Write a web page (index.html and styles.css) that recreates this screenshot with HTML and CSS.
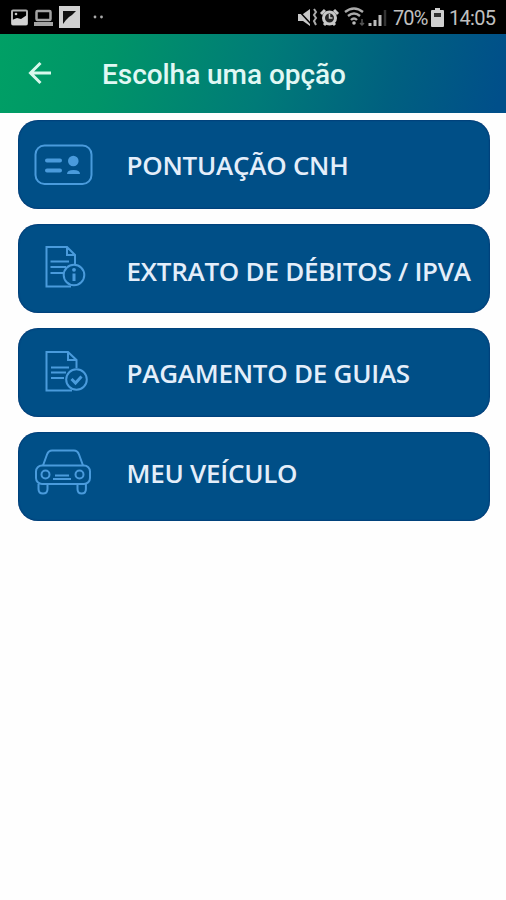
FILE: index.html
```html
<!DOCTYPE html>
<html lang="pt-BR">
<head>
    <meta charset="UTF-8">
    <meta name="viewport" content="width=device-width, initial-scale=1.0">
    <title>Escolha uma opção</title>
    <link rel="stylesheet" href="styles.css">
</head>
<body>
    <!-- Status bar -->
    <div class="status-bar">
        <svg class="status-left" width="110" height="34" viewBox="0 0 110 34">
            <rect x="12" y="10.5" width="15" height="14" rx="1" fill="none" stroke="#b4b4b4" stroke-width="2"/>
            <path d="M12 20l5-2 4 1 6-4v10H12z" fill="#d2d2d2"/>
            <circle cx="16" cy="14" r="1.3" fill="#c8c8c8"/>
            <rect x="36.5" y="11" width="14" height="9" rx="1" fill="none" stroke="#a4a4a4" stroke-width="2.500"/>
            <path d="M34 22h19v4H34z" fill="#a4a4a4"/>
            <path d="M59 6h21v22H59z" fill="#d0d0d0"/>
            <path d="M63 11h13l-4 4-3 2-3 3-3 4z" fill="#111"/>
            <circle cx="95" cy="17" r="1.4" fill="#aaa"/>
            <circle cx="101.500" cy="17" r="1.4" fill="#aaa"/>
        </svg>
        <div class="status-right">
            <svg width="94" height="34" viewBox="0 0 94 34">
                <!-- Vibrate / mute -->
                <path d="M1 14h5l7-5v17l-7-5H1z" fill="#c8c8c8"/>
                <path d="M1 10l13 14" stroke="#000" stroke-width="1.500"/>
                <path d="M17 9l2 3-2 3 2 3-2 3 2 4" fill="none" stroke="#aaa" stroke-width="2"/>
                <!-- Alarm -->
                <path d="M24 14l4-4M41 14l-4-4M27 25l2-2M38 25l-2-2" stroke="#c8c8c8" stroke-width="3"/>
                <circle cx="32.500" cy="18" r="6" fill="#222" stroke="#c8c8c8" stroke-width="3"/>
                <path d="M32.500 14v4h3" fill="none" stroke="#c8c8c8" stroke-width="1.500"/>
                <!-- Wifi -->
                <path d="M48 12q9-7 18 0M51 16q6-5 12 0M54 20q3-3 6 0" fill="none" stroke="#aaa" stroke-width="2.400"/>
                <circle cx="57" cy="23" r="1.800" fill="#bbb"/>
                <path d="M65 19v6M63 23l2 2 2-2" fill="none" stroke="#555" stroke-width="1.500"/>
                <!-- Signal -->
                <path d="M73 23v3M78 20v6M83 15v11" stroke="#bbb" stroke-width="3"/>
                <path d="M88 10v16" stroke="#333" stroke-width="2.500"/>
            </svg>
            <span class="battery-level">70%</span>
            <svg class="battery" width="13" height="20" viewBox="0 0 13 20">
                <path d="M4 0h5v2h3q1 0 1 1v15q0 1-1 1H1q-1 0-1-1V3q0-1 1-1h3z" fill="#d0d0d0"/>
                <path d="M3 5h7v4H3z" fill="#333"/>
            </svg>
            <span class="clock">14:05</span>
        </div>
    </div>

    <!-- App bar -->
    <header class="app-bar">
        <svg class="back" width="24" height="24" viewBox="0 0 24 24">
            <path d="M23 12H3M12.500 2L2.500 12l10 10" />
        </svg>
        <h1>Escolha uma opção</h1>
    </header>

    <!-- Options -->
    <main class="options">
        <a class="option points">
            <svg class="icon" viewBox="0 0 90 90">
                <rect x="17.500" y="25.500" width="56" height="38.500" rx="9"/>
                <path class="thick" d="M29 40.500h13M29 50.500h13"/>
                <circle class="fill" cx="55.300" cy="41" r="5.300"/>
                <path class="fill" d="M49 54q0-4 6.500-4t6.500 4z"/>
            </svg>
            <span>PONTUAÇÃO CNH</span>
        </a>
        <a class="option debts">
            <svg class="icon" viewBox="0 0 90 90">
                <path d="M53 62.500H28.500V23H49l8 8V40M49 23v8h8"/>
                <path d="M32.500 37.500H51M32.500 43H48M32.500 49H45"/>
                <circle cx="56" cy="51" r="10.300"/>
                <path class="info" d="M56 49.500v7.500"/>
                <circle class="fill" cx="56" cy="45.800" r="1.900"/>
            </svg>
            <span>EXTRATO DE DÉBITOS / IPVA</span>
        </a>
        <a class="option payment">
            <svg class="icon" viewBox="0 0 90 90">
                <path d="M54 62.500H28.500V24H50l8.500 8v8M50 24v8h8.500"/>
                <path d="M33 39.500H51M33 44.500H48M33 50H46"/>
                <circle cx="58.500" cy="51.500" r="10.300"/>
                <path class="check" d="M53.500 51l4 4 6-6.500"/>
            </svg>
            <span>PAGAMENTO DE GUIAS</span>
        </a>
        <a class="option vehicle">
            <svg class="icon" viewBox="0 0 90 90">
                <path d="M25 34.500l4-11q1.500-4 5-4H56q3.500 0 5 4l4 11"/>
                <rect x="18" y="34.500" width="54" height="18.500" rx="6"/>
                <path d="M20.500 53v5q0 4.500 4.500 4.500t4.500-4.500v-5M59.500 53v5q0 4.500 4.200 4.500t4.200-4.500v-5"/>
                <circle cx="27.500" cy="43.500" r="4"/>
                <circle cx="61.500" cy="43.500" r="4"/>
                <path d="M37 44.500h14M35 48h18"/>
            </svg>
            <span>MEU VEÍCULO</span>
        </a>
    </main>
</body>
</html>
```
FILE: styles.css
```css
/* General */
body {
    margin: 0;
    min-height: 100vh;
    background-color: #fefefe;
    font-family: "Open Sans", "Noto Sans", sans-serif;
}

/* Status bar */
.status-bar {
    display: flex;
    justify-content: space-between;
    height: 34px;
    background-color: #000;
    color: #c0c0c0;
    font-family: Roboto, sans-serif;
    font-size: 20px;
}

.status-right {
    display: flex;
    align-items: center;
    width: 209px;
}

.battery-level {
    width: 36px;
    margin-left: 2px;
    letter-spacing: -0.9px;
    padding-top: 2px;
}

.battery {
    margin: 2px 0 0 2px;
}

.clock {
    margin-left: 5px;
    padding-top: 2px;
    letter-spacing: -0.7px;
}

/* App bar */
.app-bar {
    display: flex;
    align-items: center;
    height: 78.500px;
    padding-left: 28px;
    box-sizing: border-box;
    background: linear-gradient(105deg, #00a065 0%, #009468 22%, #007b78 52%, #006080 77%, #004f8a 98%);
}

.app-bar h1 {
    margin: 2px 0 0 50px;
    color: #e0f8f4;
    font: 500 28px Roboto, sans-serif;
    letter-spacing: -0.05px;
}

.back {
    fill: none;
    stroke: #d8f8ec;
    stroke-width: 3;
}

/* Options list */
.options {
    display: flex;
    flex-direction: column;
    gap: 15px;
    padding: 7px 16px 0 17.500px;
}

.option {
    display: flex;
    height: 89.200px;
    box-sizing: border-box;
    border-radius: 20px;
    background-color: #004f87;
    box-shadow: inset 0 0 2px #002060;
    color: #e4eefa;
    font-size: 26px;
    font-weight: 600;
    letter-spacing: -0.25px;
    line-height: 36px;
    white-space: nowrap;
}

.option span {
    margin-left: 19px;
    padding-top: 27px;
}

.debts span {
    padding-top: 29px;
}

.vehicle span {
    padding-top: 23px;
}

/* Icons */
.icon {
    flex: none;
    width: 90px;
    height: 90px;
    fill: none;
    stroke: #4a9bdc;
    stroke-width: 2;
}

.vehicle .icon {
    margin-top: -1px;
}

.icon .thick {
    stroke-width: 4;
    stroke-linecap: round;
}

.icon .info,
.icon .check {
    stroke-width: 3;
}

.icon .fill {
    fill: #4a9bdc;
    stroke: none;
}
```
